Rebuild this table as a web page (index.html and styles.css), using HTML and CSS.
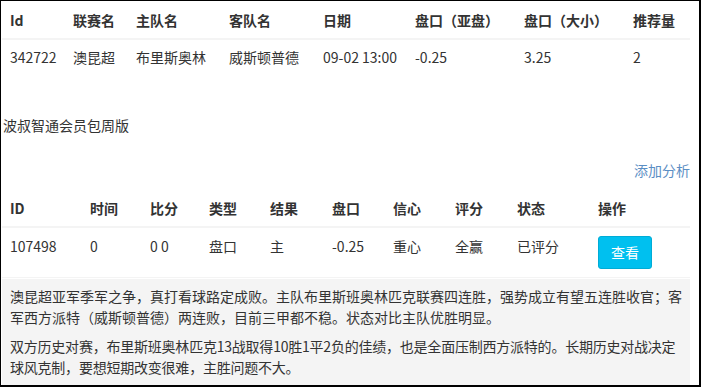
FILE: index.html
```html
<!DOCTYPE html>
<html lang="zh-CN">
<head>
<meta charset="utf-8">
<title>推荐详情</title>
<link rel="stylesheet" href="styles.css">
</head>
<body>
<div class="frame">
  <div class="content">
    <table class="tbl tbl-match">
      <colgroup>
        <col class="c63"><col class="c63"><col class="c93"><col class="c94"><col class="c92"><col class="c109"><col class="c109"><col>
      </colgroup>
      <thead>
        <tr><th>Id</th><th>联赛名</th><th>主队名</th><th>客队名</th><th>日期</th><th>盘口（亚盘）</th><th>盘口（大小）</th><th>推荐量</th></tr>
      </thead>
      <tbody>
        <tr><td>342722</td><td>澳昆超</td><td>布里斯奥林</td><td>威斯顿普德</td><td>09-02 13:00</td><td>-0.25</td><td>3.25</td><td>2</td></tr>
      </tbody>
    </table>

    <div class="plan-title">波叔智通会员包周版</div>
    <div class="add-row"><a class="add-link">添加分析</a></div>

    <table class="tbl tbl-analysis">
      <colgroup>
        <col class="c80"><col class="c60"><col class="c59"><col class="c61"><col class="c62"><col class="c61"><col class="c62"><col class="c62"><col class="c81"><col>
      </colgroup>
      <thead>
        <tr><th>ID</th><th>时间</th><th>比分</th><th>类型</th><th>结果</th><th>盘口</th><th>信心</th><th>评分</th><th>状态</th><th>操作</th></tr>
      </thead>
      <tbody>
        <tr><td>107498</td><td>0</td><td>0 0</td><td>盘口</td><td>主</td><td>-0.25</td><td>重心</td><td>全赢</td><td>已评分</td><td><button class="btn-view">查看</button></td></tr>
      </tbody>
    </table>

    <div class="analysis-box">
      <p>澳昆超亚军季军之争，真打看球路定成败。主队布里斯班奥林匹克联赛四连胜，强势成立有望五连胜收官；客军西方派特（威斯顿普德）两连败，目前三甲都不稳。状态对比主队优胜明显。</p>
      <p class="tight">双方历史对赛，布里斯班奥林匹克13战取得10胜1平2负的佳绩，也是全面压制西方派特的。长期历史对战决定球风克制，要想短期改变很难，主胜问题不大。</p>
    </div>
  </div>
</div>
</body>
</html>
```

FILE: styles.css
```css
html, body {
  margin: 0;
  padding: 0;
  background: #fff;
}

.frame {
  width: 701px;
  height: 387px;
  box-sizing: border-box;
  border: 1px solid #000;
  border-right-width: 2px;
  border-bottom-width: 2px;
  overflow: hidden;
  font-family: "Noto Sans CJK SC", "Noto Sans", sans-serif;
  font-size: 14px;
  color: #333;
  text-autospace: no-autospace;
}

.content {
  width: 688px;
  margin-left: 1px;
}

.tbl {
  width: 688px;
  table-layout: fixed;
  border-collapse: collapse;
  border-spacing: 0;
}

.tbl th {
  text-align: left;
  font-weight: bold;
  line-height: 20px;
  padding: 9px 8px 8px;
  border-bottom: 2px solid #f4f4f4;
  white-space: nowrap;
}

.tbl td {
  line-height: 20px;
  padding: 7px 8px 8px;
  white-space: nowrap;
  vertical-align: top;
}

.tbl-analysis {
  margin-top: 9px;
}

.tbl-analysis td {
  padding: 8px 8px 8px;
  border-bottom: 1px solid #f4f4f4;
}

.c59 { width: 59px; }
.c60 { width: 60px; }
.c61 { width: 61px; }
.c62 { width: 62px; }
.c63 { width: 63px; }
.c80 { width: 80px; }
.c81 { width: 81px; }
.c92 { width: 92px; }
.c93 { width: 93px; }
.c94 { width: 94px; }
.c109 { width: 109px; }

.plan-title {
  margin-top: 40px;
  line-height: 20px;
  padding-left: 1px;
}

.add-row {
  margin-top: 25px;
  line-height: 20px;
  text-align: right;
}

.add-link {
  color: #5b8ec4;
  text-decoration: none;
  cursor: pointer;
}

.btn-view {
  display: inline-block;
  font-family: inherit;
  font-size: 14px;
  line-height: 19px;
  padding: 6px 12px;
  color: #fff;
  background: #00c0ef;
  border: 1px solid #00acd6;
  border-radius: 3px;
  cursor: pointer;
}

.analysis-box {
  margin-top: 1px;
  background: #f4f4f4;
  padding: 7px 8px 8px;
  line-height: 21px;
  height: 120px;
}

.analysis-box p {
  margin: 0 0 8px;
}

.analysis-box .tight {
  letter-spacing: -0.22px;
}
```
